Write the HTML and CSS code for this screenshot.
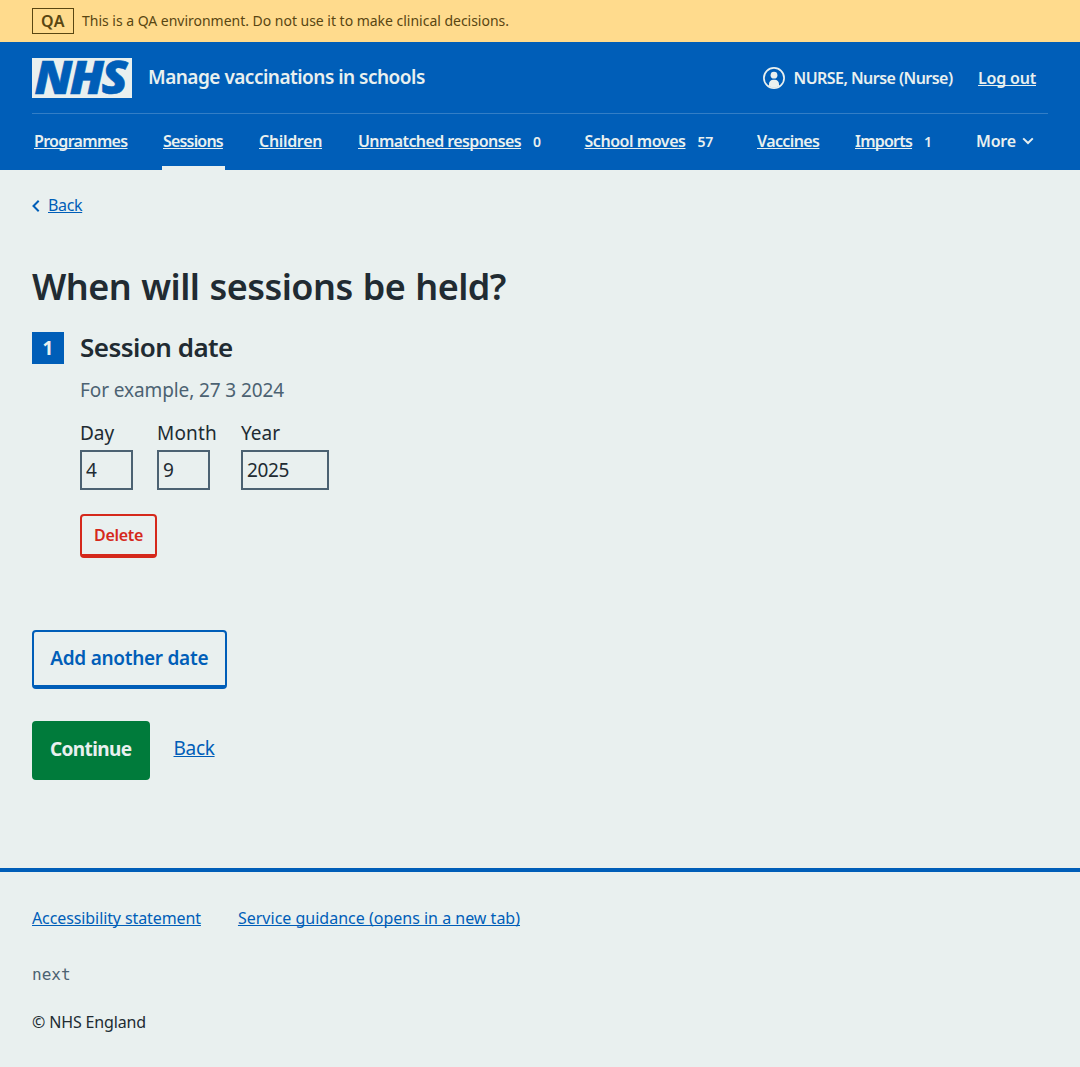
FILE: index.html
```
<!DOCTYPE html>
<html lang="en">
<head>
<meta charset="utf-8">
<title>When will sessions be held? – Manage vaccinations in schools</title>
<link rel="stylesheet" href="styles.css">
</head>
<body>
<div class="environment">
  <strong class="environment-tag">QA</strong>
  <span class="environment-text">This is a QA environment. Do not use it to make clinical decisions.</span>
</div>
<header class="header">
  <div class="header-top">
    <svg class="logo" width="100" height="40" viewBox="0 0 100 40" role="img" aria-label="NHS"><rect class="logo-background" width="100" height="40"/><text class="logo-text" x="2.6" y="36.4" textLength="90.5" lengthAdjust="spacingAndGlyphs">NHS</text></svg>
    <span class="service-name">Manage vaccinations in schools</span>
    <div class="account">
      <svg class="account-icon" width="22" height="22" viewBox="0 0 22 22"><circle class="ring" cx="11" cy="11" r="10.1"/><circle cx="11" cy="8.2" r="3.4"/><path d="M6 19.2V17a4.2 4.2 0 0 1 4.2-4.2h1.6A4.2 4.2 0 0 1 16 17v2.2a10 10 0 0 1-10 0Z"/></svg>
      <span class="account-name">NURSE, Nurse (Nurse)</span>
      <a class="logout" href="#">Log out</a>
    </div>
  </div>
  <nav class="nav">
    <div class="nav-item"><a class="n-programmes" href="#">Programmes</a></div>
    <div class="nav-item current"><a class="n-sessions" href="#">Sessions</a></div>
    <div class="nav-item"><a class="n-children" href="#">Children</a></div>
    <div class="nav-item"><a class="n-unmatched" href="#">Unmatched responses</a><span class="count">0</span></div>
    <div class="nav-item"><a class="n-moves" href="#">School moves</a><span class="count">57</span></div>
    <div class="nav-item"><a class="n-vaccines" href="#">Vaccines</a></div>
    <div class="nav-item"><a class="n-imports" href="#">Imports</a><span class="count">1</span></div>
    <div class="nav-item more">More<svg width="12" height="8" viewBox="0 0 12 8"><path d="M1.2 1.4 6 6l4.8-4.6"/></svg></div>
  </nav>
</header>
<main class="main">
  <div class="back-link"><svg width="8" height="12" viewBox="0 0 8 12"><path d="M6.7.8 1.5 6l5.2 5.2"/></svg><a href="#">Back</a></div>
  <h1 class="page-title">When will sessions be held?</h1>
  <section class="session">
    <span class="session-number">1</span>
    <div class="session-body">
      <h2 class="session-title">Session date</h2>
      <p class="hint">For example, 27 3 2024</p>
      <div class="date">
        <label class="field">Day<input class="input" type="text" value="4"></label>
        <label class="field field-month"><span class="month-label">Month</span><input class="input" type="text" value="9"></label>
        <label class="field">Year<input class="input input-year" type="text" value="2025"></label>
      </div>
      <button class="button button-delete">Delete</button>
    </div>
  </section>
  <button class="button button-add">Add another date</button>
  <div class="actions">
    <button class="button button-continue">Continue</button>
    <a class="action-link" href="#">Back</a>
  </div>
</main>
<footer class="footer">
  <div class="footer-links">
    <a class="footer-accessibility" href="#">Accessibility statement</a>
    <a href="#">Service guidance (opens in a new tab)</a>
  </div>
  <code class="version">next</code>
  <p class="copyright">© NHS England</p>
</footer>
</body>
</html>
```
FILE: styles.css
```
:root {
  --page: #e9f0ef;
  --blue: #005eb8;
  --ink: #212b32;
  --muted: #4c6272;
  --red: #d5281b;
}

* { box-sizing: border-box; }

body {
  margin: 0;
  background: var(--page);
  color: var(--ink);
  font: 16px/24px "Noto Sans", "Open Sans", sans-serif;
}

h1, h2, p { margin: 0; font-weight: 600; }

a {
  color: var(--blue);
  text-decoration-thickness: 1px;
  text-underline-offset: 1px;
  text-decoration-skip-ink: none;
}

/* Environment banner */
.environment {
  height: 42px;
  padding: 0 32px;
  display: flex;
  align-items: center;
  gap: 8px;
  background: #ffdb8d;
  color: #594612;
  font-size: 14px;
}

.environment-text { letter-spacing: -.02px; }

.environment-tag {
  width: 42px;
  height: 26px;
  border: 1px solid;
  font-size: 16px;
  line-height: 24px;
  font-weight: 600;
  letter-spacing: .4px;
  text-align: center;
}

/* Header */
.header {
  height: 128px;
  padding: 0 32px;
  background: var(--blue);
  color: var(--page);
  font-weight: 600;
}

.header a { color: inherit; }

.header-top {
  height: 72px;
  display: flex;
  align-items: center;
  border-bottom: 1px solid #337ec6;
}

.logo { margin-top: 1px; overflow: visible; }
.logo-background { fill: var(--page); }

.logo-text {
  font: italic 800 45.5px "Open Sans", sans-serif;
  letter-spacing: -2.5px;
  fill: var(--blue);
  stroke: var(--blue);
  stroke-width: .6;
}

.service-name {
  margin: -1px 0 0 16px;
  font-size: 19px;
  letter-spacing: -.51px;
}

.account {
  margin-left: auto;
  padding-right: 12px;
  display: flex;
  align-items: center;
}

.account-icon { fill: currentColor; margin: 1px 8px 0 0; }
.account-icon .ring { fill: none; stroke: currentColor; stroke-width: 1.7; }
.account-name { letter-spacing: -.55px; margin-left: .5px; }
.logout { margin-left: 25.5px; letter-spacing: -.2px; }

.nav {
  height: 56px;
  display: grid;
  grid-template-columns: 129.5px 95.5px 99px 226.5px 172.5px 98px 121px auto;
}

.nav-item {
  justify-self: start;
  display: flex;
  align-items: center;
  padding: 0 2px 2px;
}

.current { padding: 2px 2.5px 0 1.5px; border-bottom: 4px solid var(--page); }
.count { margin-left: 12px; font-size: 14px; padding-top: 1px; letter-spacing: -.3px; }
.more { letter-spacing: -.2px; }
.more svg { margin-left: 6px; fill: none; stroke: currentColor; stroke-width: 2; }
.n-programmes { letter-spacing: -.68px; }
.n-sessions { letter-spacing: -.82px; }
.n-children { letter-spacing: -.33px; }
.n-unmatched { letter-spacing: -.59px; }
.n-moves { letter-spacing: -.45px; }
.n-vaccines { letter-spacing: -.6px; }
.n-imports { letter-spacing: -.78px; }

/* Content */
.main { height: 698px; padding: 24px 32px 0; }

.back-link {
  height: 24px;
  display: flex;
  align-items: center;
  gap: 8px;
  letter-spacing: -.35px;
}

.back-link a { margin-top: -2px; }
.back-link svg { fill: none; stroke: var(--blue); stroke-width: 2; }

.page-title {
  margin-top: 47px;
  font-size: 36px;
  line-height: 44px;
  letter-spacing: -.55px;
  word-spacing: 1.3px;
}

.session { margin-top: 23px; display: flex; gap: 16px; }

.session-number {
  width: 32px;
  height: 32px;
  background: var(--blue);
  color: var(--page);
  font-size: 19px;
  line-height: 32px;
  font-weight: 700;
  text-align: center;
}

.session-title { font-size: 26px; line-height: 30px; letter-spacing: -.53px; }

.hint {
  margin-top: 14px;
  color: var(--muted);
  font-size: 19px;
  line-height: 28px;
  font-weight: 400;
  letter-spacing: -.1px;
}

.date { margin-top: 15px; display: flex; }

.field {
  margin-right: 24px;
  display: flex;
  flex-direction: column;
  gap: 3px;
  font-size: 19px;
  line-height: 28px;
}

.field-month { width: 60px; }
.month-label { letter-spacing: .18px; }

.input {
  width: 53px;
  height: 40px;
  padding: 0 4px;
  border: 2px solid var(--muted);
  border-radius: 0;
  background: none;
  color: var(--ink);
  font: inherit;
  letter-spacing: -.37px;
}

.input-year { width: 88px; }

.button {
  display: block;
  padding: 0;
  border: 2px solid currentColor;
  border-bottom-width: 4px;
  border-radius: 4px;
  background: none;
  font: 600 19px/28px "Noto Sans", "Open Sans", sans-serif;
}

.button-delete {
  width: 77px;
  height: 44px;
  margin-top: 24px;
  color: var(--red);
  font-size: 16px;
  letter-spacing: -.3px;
}

.button-add {
  width: 194.5px;
  height: 59px;
  margin-top: 72px;
  padding-bottom: 2px;
  color: var(--blue);
  letter-spacing: -.28px;
}

.actions { margin-top: 32px; display: flex; gap: 24px; }

.button-continue {
  width: 117.5px;
  height: 59px;
  padding-bottom: 2px;
  border-color: #007b3b;
  background: #007b3b;
  color: var(--page);
  font-weight: 700;
  letter-spacing: -.6px;
}

.action-link { margin-top: 13px; font-size: 19px; line-height: 28px; letter-spacing: -.3px; }

/* Footer */
.footer {
  border-top: 4px solid var(--blue);
  padding: 34px 32px;
}

.footer-links { display: flex; gap: 37px; }
.footer-accessibility { letter-spacing: -.1px; }

.version {
  display: block;
  margin-top: 33px;
  color: var(--muted);
  font: 16px/24px "DejaVu Sans Mono", monospace;
}

.copyright { margin-top: 23px; font-weight: 400; letter-spacing: -.15px; }
```
